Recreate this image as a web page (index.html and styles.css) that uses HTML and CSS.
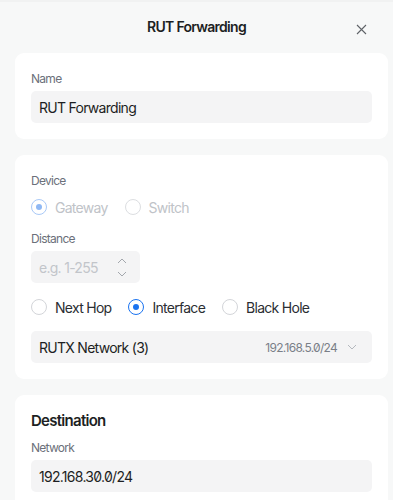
FILE: index.html
```html
<!DOCTYPE html>
<html lang="en">
<head>
    <meta charset="UTF-8">
    <meta name="viewport" content="width=device-width, initial-scale=1.0">
    <title>RUT Forwarding</title>
    <link rel="stylesheet" href="styles.css">
</head>
<body>
    <div class="header">
        <h1>RUT Forwarding</h1>
        <button class="close-button" aria-label="Close">
            <svg width="11" height="11" viewBox="0 0 11 11"><path d="M1 1L10 10M10 1L1 10" stroke="#5f6368" stroke-width="1.1" fill="none"/></svg>
        </button>
    </div>

    <div class="sheet">
        <div class="card">
            <div class="field-label">Name</div>
            <div class="text-input">RUT Forwarding</div>
        </div>

        <div class="card">
            <div class="field-label">Device</div>
            <div class="radio-group radio-group-device">
                <label class="radio checked disabled"><span class="radio-dot"></span>Gateway</label>
                <label class="radio disabled"><span class="radio-dot"></span>Switch</label>
            </div>

            <div class="field-label">Distance</div>
            <div class="number-input">
                <span class="placeholder">e.g. 1-255</span>
                <span class="stepper">
                    <svg width="10" height="6" viewBox="0 0 10 6"><path d="M1 5L5 1L9 5" stroke="#a3a7ad" stroke-width="1" fill="none"/></svg>
                    <svg width="10" height="6" viewBox="0 0 10 6"><path d="M1 1L5 5L9 1" stroke="#a3a7ad" stroke-width="1" fill="none"/></svg>
                </span>
            </div>

            <div class="radio-group radio-group-type">
                <label class="radio"><span class="radio-dot"></span>Next Hop</label>
                <label class="radio checked"><span class="radio-dot"></span>Interface</label>
                <label class="radio"><span class="radio-dot"></span>Black Hole</label>
            </div>

            <div class="select">
                <span class="select-value">RUTX Network (3)</span>
                <span class="select-extra">192.168.5.0/24</span>
                <svg class="chevron" width="10" height="6" viewBox="0 0 10 6"><path d="M1 1L5 5L9 1" stroke="#b4b8be" stroke-width="1" fill="none"/></svg>
            </div>
        </div>

        <div class="card">
            <h2>Destination</h2>
            <div class="field-label">Network</div>
            <div class="text-input">192.168.30.0/24</div>
        </div>
    </div>
</body>
</html>
```

FILE: styles.css
```css
* {
    margin: 0;
    padding: 0;
    box-sizing: border-box;
}

body {
    font-family: Inter, "Noto Sans", sans-serif;
    font-feature-settings: "zero" 1;
    letter-spacing: -0.045em;
    background: #f7f8f8;
    color: #1d1f23;
    border-top: 2px solid #f1f2f2;
}

.header {
    display: grid;
    grid-template-columns: 1fr auto 1fr;
    align-items: center;
    height: 51px;
}

.header h1 {
    grid-column: 2;
    font-size: 14px;
    font-weight: 600;
    margin-top: -2px;
}

.close-button {
    grid-column: 3;
    justify-self: end;
    margin-right: 26px;
    margin-top: 4px;
    background: none;
    border: none;
    width: 11px;
    height: 11px;
    display: flex;
    cursor: pointer;
}

.sheet {
    padding: 0 5px 16px 15px;
}

.card {
    background: white;
    border-radius: 9px;
    padding: 16px;
    margin-bottom: 16px;
}

.card h2 {
    font-size: 15px;
    font-weight: 600;
    line-height: 20px;
    margin-bottom: 7px;
}

.field-label {
    font-size: 12px;
    line-height: 20px;
    color: #6b707a;
    margin-bottom: 2px;
}

.text-input,
.number-input,
.select {
    background: #f4f4f5;
    border-radius: 5px;
    height: 32px;
    padding: 0 8px;
    display: flex;
    align-items: center;
    font-size: 14px;
}

.number-input {
    width: 109px;
    margin-bottom: 12px;
}

.placeholder {
    flex: 1;
    color: #c2c5ca;
}

.stepper {
    display: flex;
    flex-direction: column;
    gap: 7px;
    margin-right: 5px;
}

.stepper svg {
    display: block;
}

.radio-group {
    display: flex;
    height: 24px;
    align-items: center;
    gap: 17px;
}

.radio-group-device {
    margin-top: 4px;
    margin-bottom: 10px;
}

.radio-group-type {
    margin-bottom: 12px;
}

.radio {
    display: flex;
    align-items: center;
    font-size: 14px;
    color: #2b2e33;
}

.radio-dot {
    width: 16px;
    height: 16px;
    border-radius: 50%;
    border: 1px solid #d3d5d9;
    background: white;
    margin-right: 8px;
    display: flex;
    align-items: center;
    justify-content: center;
}

.radio.checked .radio-dot {
    border: 1.5px solid #1a73f0;
}

.radio.checked .radio-dot::after {
    content: "";
    width: 6px;
    height: 6px;
    border-radius: 50%;
    background: #1a73f0;
}

.radio.disabled {
    color: #c0c3c8;
}

.radio.disabled .radio-dot {
    border-color: #dcdee1;
}

.radio.checked.disabled .radio-dot {
    border-color: #a9c9f7;
}

.radio.checked.disabled .radio-dot::after {
    background: #8fb8f4;
}

.select-value {
    flex: 1;
}

.select-extra {
    font-size: 12px;
    color: #7a7f88;
    margin-right: 10px;
}

.chevron {
    margin-right: 7px;
}
```
